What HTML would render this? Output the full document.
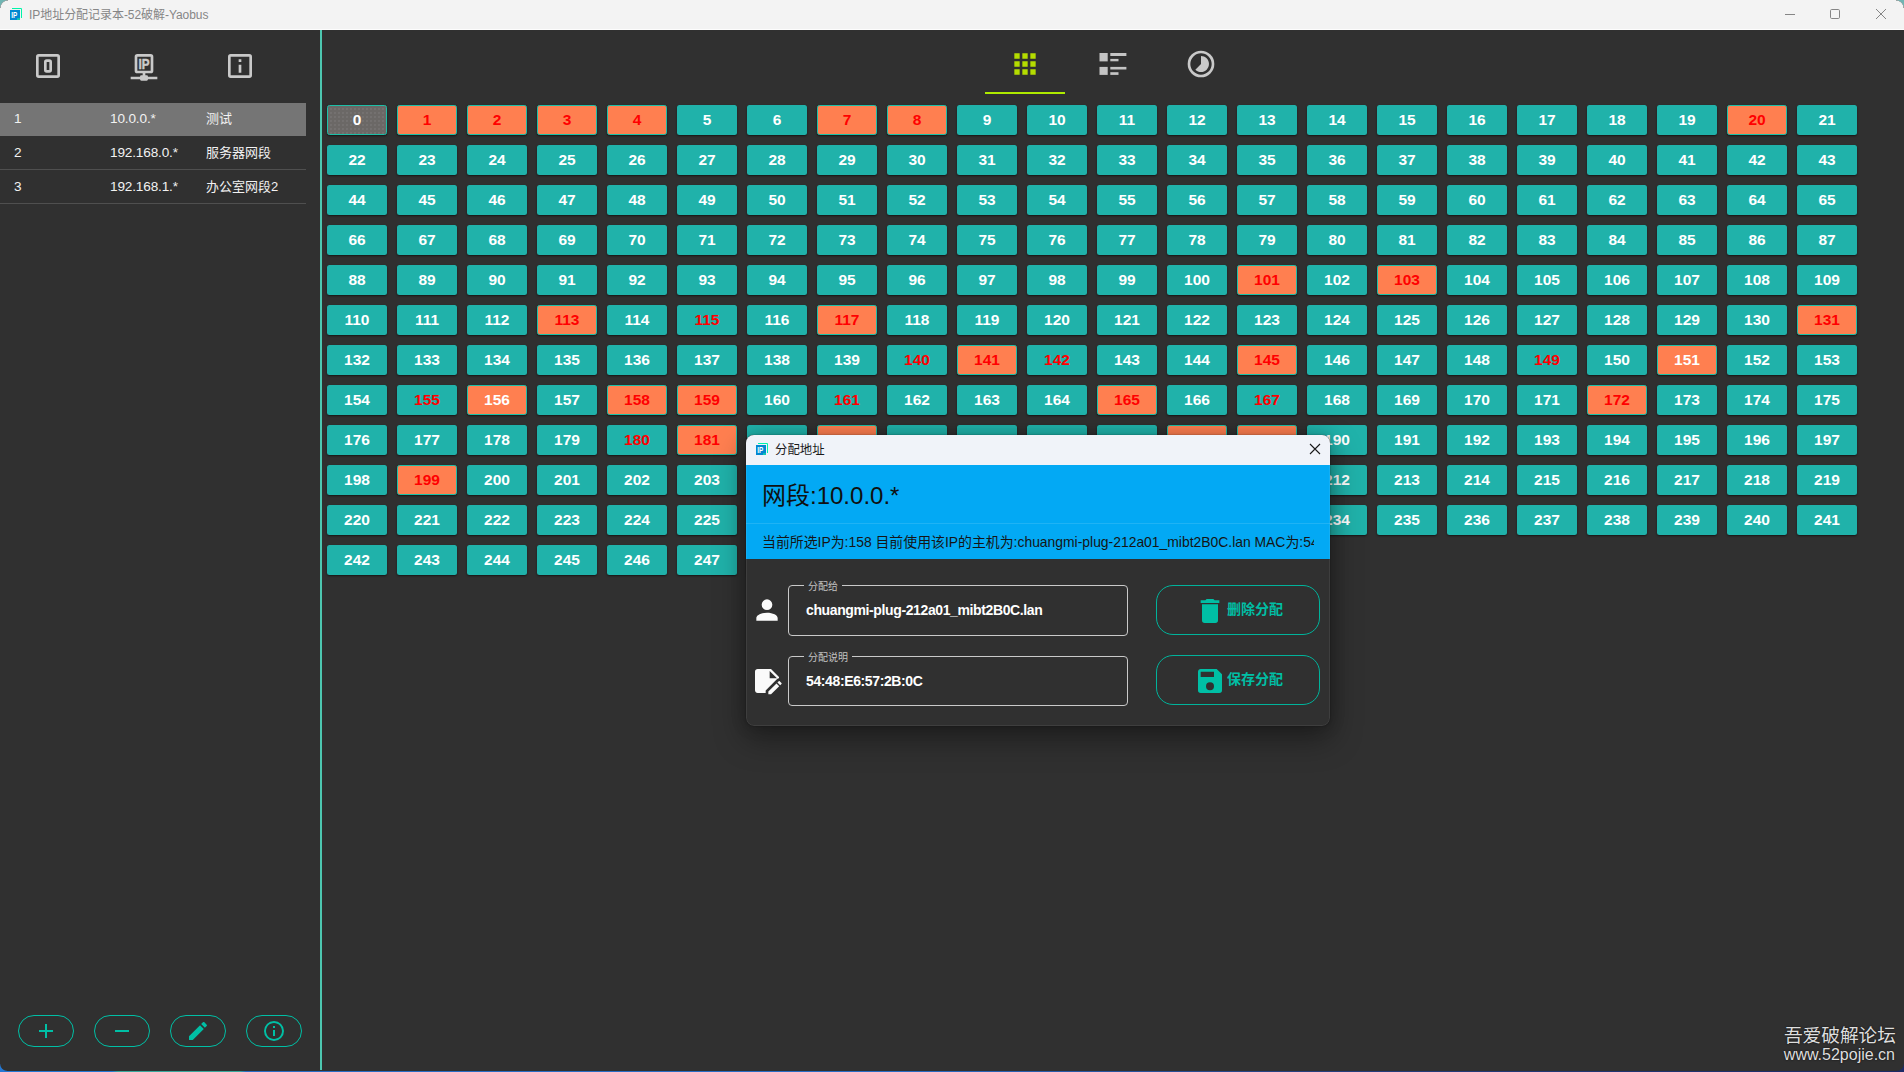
<!DOCTYPE html>
<html lang="zh-CN">
<head>
<meta charset="utf-8">
<title>IP地址分配记录本-52破解-Yaobus</title>
<style>
*{box-sizing:border-box;margin:0;padding:0}
html,body{width:1904px;height:1072px;overflow:hidden;background:#303030}
body{position:relative;font-family:"Liberation Sans","Noto Sans CJK SC",sans-serif;color:#fff}
.abs{position:absolute}
#titlebar{position:absolute;left:0;top:0;width:1904px;height:30px;background:#f3f3f3;border-bottom:1px solid #fdfdfd}
#title{position:absolute;left:29px;top:7px;letter-spacing:-0.05px;font-size:12px;line-height:17px;color:#868686;white-space:nowrap}
#vline{position:absolute;left:320px;top:30px;width:2px;height:1040px;background:#4dc7b0}
.row{position:absolute;left:0;width:306px;height:33px;font-size:13px;line-height:33px;color:#f2f2f2;white-space:nowrap}
.row span{position:absolute;top:0}
.row .a{left:14px;font-size:13.6px}.row .b{left:110px;font-size:13.6px;letter-spacing:-0.15px}.row .d{left:206px}
.sep{position:absolute;left:0;width:306px;height:1px;background:#4f4f4f}
.c{position:absolute;width:60px;height:30px;background:#20b2aa;border-radius:2.5px;font-weight:bold;font-size:15.5px;line-height:29px;text-align:center;color:#fff;box-shadow:0 1px 2px rgba(0,0,0,.55)}
.c.o{background:#ff7f50;border:1px solid #1cbfa8;line-height:27px}
.c.g{background:#6b6866 radial-gradient(circle,rgba(255,255,255,.13) 0.5px,rgba(255,255,255,0) 0.9px) 1px 1px/4px 4px;border:1px solid #1cbfa8;line-height:27px}
.c.r{color:#ff0000}
.pill{position:absolute;top:1015px;width:56px;height:32px;border:1px solid #00bfa5;border-radius:16px}
.pill svg{position:absolute;left:15px;top:3px;width:24px;height:24px;fill:#00bfa5}
svg{display:block}
#dlg{position:absolute;left:746px;top:435px;width:584px;height:291px;background:#303030;border-radius:8px;box-shadow:0 12px 30px 2px rgba(0,0,0,.36),0 0 16px rgba(0,0,0,.18),0 0 1.5px rgba(0,0,0,.5);overflow:hidden}
#dlg::after{content:"";position:absolute;left:0;top:0;right:0;bottom:0;border:1px solid rgba(255,255,255,.07);border-radius:8px}
#dlgt{position:absolute;left:0;top:0;width:584px;height:30px;background:#f0f3f9}
#dlgt .t{position:absolute;left:29px;top:6.5px;font-size:12.4px;line-height:17px;color:#1a1a1a}
#hd1{position:absolute;left:0;top:30px;width:584px;height:59px;background:#03a9f4;border-bottom:1px solid #1fb3f5}
#hd1 span{position:absolute;left:16px;top:15px;font-size:24px;line-height:32px;color:#101010;white-space:nowrap}
#hd2{position:absolute;left:0;top:89px;width:584px;height:35px;background:#03a9f4}
#hd2 div{position:absolute;left:16px;top:0;width:552px;height:35px;overflow:hidden}
#hd2 span{position:absolute;left:0;top:9px;font-size:13.9px;line-height:18px;color:#151515;white-space:nowrap}
.inp{position:absolute;left:42px;width:340px;height:51px;border:1px solid #c9c9c9;border-radius:4px}
.inp .lab{position:absolute;left:15px;top:-6.5px;padding:0 4px;background:#303030;font-size:10px;line-height:14px;color:#c2c2c2;white-space:nowrap}
.inp .val{position:absolute;left:17px;top:14px;font-size:14px;letter-spacing:-0.38px;line-height:20px;font-weight:bold;color:#fff;white-space:nowrap}
.btn{position:absolute;left:410px;width:164px;height:50px;border:1px solid #00b39b;border-radius:17px;color:#00bfa5}
.btn svg{position:absolute;left:37px;top:9px;width:32px;height:32px;fill:#00bfa5}
.btn span{position:absolute;left:70px;top:13px;font-size:14px;line-height:20px;font-weight:bold;white-space:nowrap}
.dico{position:absolute;left:5px;width:32px;height:32px;fill:#fafafa}
#wm{position:absolute;right:9px;top:1024px;text-align:right;color:#dedede;white-space:nowrap;text-shadow:0 0 2px rgba(0,0,0,.8)}
#wm .l1{font-size:18.7px;line-height:24px;margin-right:-1px}
#wm .l2{font-size:16px;line-height:18px;margin-top:-2px}
</style>
</head>
<body>
<!-- window title bar -->
<div id="titlebar">
  <svg class="abs" style="left:9px;top:7px" width="14" height="14" viewBox="0 0 14 14">
    <path d="M3 1.5h9.5V11" fill="none" stroke="#00f4a9" stroke-width="1"/>
    <rect x="1" y="3" width="10" height="10" fill="#0288d1"/>
    <rect x="8" y="11.2" width="3" height="1.8" fill="#14c9b0"/>
    <text x="2.2" y="11.1" font-family="Liberation Sans, sans-serif" font-size="8.8" font-weight="bold" fill="#fff" textLength="6" lengthAdjust="spacingAndGlyphs">IP</text>
  </svg>
  <div id="title">IP地址分配记录本-52破解-Yaobus</div>
  <svg class="abs" style="left:1780px;top:4px" width="112" height="22" viewBox="0 0 112 22" fill="none" stroke="#858585" stroke-width="1">
    <path d="M5 10.5h10"/>
    <rect x="50.5" y="5.5" width="9" height="9" rx="1.2"/>
    <path d="M96 5l10 10M106 5l-10 10"/>
  </svg>
</div>

<!-- left panel -->
<svg class="abs" style="left:32px;top:50px" width="32" height="32" viewBox="0 0 24 24" fill="#c9c9c9"><path d="M19,19V5H5V19H19M19,3A2,2 0 0,1 21,5V19A2,2 0 0,1 19,21H5A2,2 0 0,1 3,19V5A2,2 0 0,1 5,3H19M11,7H13A2,2 0 0,1 15,9V15A2,2 0 0,1 13,17H11A2,2 0 0,1 9,15V9A2,2 0 0,1 11,7M11,9V15H13V9H11Z"/></svg>
<svg class="abs" style="left:128px;top:50px" width="32" height="32" viewBox="0 0 24 24" fill="#c9c9c9">
  <path fill-rule="evenodd" d="M7,3H17A2,2 0 0,1 19,5V15.5A2,2 0 0,1 17,17.5H13V19H14A1,1 0 0,1 15,20H22V22H15A1,1 0 0,1 14,23H10A1,1 0 0,1 9,22H2V20H9A1,1 0 0,1 10,19H11V17.5H7A2,2 0 0,1 5,15.5V5A2,2 0 0,1 7,3M7,5V15.5H17V5H7Z"/>
  <text x="7.9" y="14.1" font-family="Liberation Sans, sans-serif" font-size="10.6" font-weight="bold" stroke="#c9c9c9" stroke-width="0.35" textLength="8.3" lengthAdjust="spacingAndGlyphs">IP</text>
</svg>
<svg class="abs" style="left:224px;top:50px" width="32" height="32" viewBox="0 0 24 24" fill="#c9c9c9"><path d="M11,7H13V9H11V7M11,11H13V17H11V11M19,3H5A2,2 0 0,0 3,5V19A2,2 0 0,0 5,21H19A2,2 0 0,0 21,19V5A2,2 0 0,0 19,3M19,19H5V5H19V19Z"/></svg>

<div class="row" style="top:103px;background:#757575;line-height:32px"><span class="a">1</span><span class="b">10.0.0.*</span><span class="d">测试</span></div>
<div class="row" style="top:136px;line-height:34px"><span class="a">2</span><span class="b">192.168.0.*</span><span class="d">服务器网段</span></div>
<div class="sep" style="top:169px"></div>
<div class="row" style="top:170px"><span class="a">3</span><span class="b">192.168.1.*</span><span class="d">办公室网段2</span></div>
<div class="sep" style="top:203px"></div>

<div class="pill" style="left:18px"><svg viewBox="0 0 24 24"><path d="M19,13H13V19H11V13H5V11H11V5H13V11H19V13Z"/></svg></div>
<div class="pill" style="left:94px"><svg viewBox="0 0 24 24"><path d="M19,13H5V11H19V13Z"/></svg></div>
<div class="pill" style="left:170px"><svg viewBox="0 0 24 24"><path d="M20.71,7.04C21.1,6.65 21.1,6 20.71,5.63L18.37,3.29C18,2.9 17.35,2.9 16.96,3.29L15.12,5.12L18.87,8.87M3,17.25V21H6.75L17.81,9.93L14.06,6.18L3,17.25Z"/></svg></div>
<div class="pill" style="left:246px"><svg viewBox="0 0 24 24"><path d="M11,9H13V7H11M12,20C7.59,20 4,16.41 4,12C4,7.59 7.59,4 12,4C16.41,4 20,7.59 20,12C20,16.41 16.41,20 12,20M12,2A10,10 0 0,0 2,12A10,10 0 0,0 12,22A10,10 0 0,0 22,12A10,10 0 0,0 12,2M11,17H13V11H11V17Z"/></svg></div>

<div id="vline"></div>

<!-- top tabs -->
<svg class="abs" style="left:1009px;top:48px" width="32" height="32" viewBox="0 0 24 24" fill="#b4dc00"><path d="M4 8h4V4H4v4zm6 12h4v-4h-4v4zm-6 0h4v-4H4v4zm0-6h4v-4H4v4zm6 0h4v-4h-4v4zm6-10v4h4V4h-4zm-6 4h4V4h-4v4zm6 6h4v-4h-4v4zm0 6h4v-4h-4v4z"/></svg>
<div class="abs" style="left:985px;top:92px;width:80px;height:2px;background:#aeea00"></div>
<svg class="abs" style="left:1099px;top:52px" width="28" height="24" viewBox="0 0 28 24" fill="#c4c4c4">
  <rect x="0.5" y="1" width="8.2" height="8.4"/><rect x="11.3" y="1" width="16.1" height="3"/><rect x="11.3" y="6.9" width="8.2" height="2.4"/>
  <rect x="0.5" y="14.9" width="8.2" height="8"/><rect x="11.3" y="14.9" width="16.1" height="2.6"/><rect x="11.3" y="20.2" width="8.2" height="2.7"/>
</svg>
<svg class="abs" style="left:1185px;top:48px" width="32" height="32" viewBox="0 0 24 24" fill="#c9c9c9"><path d="M16.24,7.76C15.07,6.58 13.53,6 12,6V12L7.76,16.24C10.1,18.58 13.9,18.58 16.24,16.24C18.59,13.9 18.59,10.1 16.24,7.76M12,2A10,10 0 0,0 2,12A10,10 0 0,0 12,22A10,10 0 0,0 22,12A10,10 0 0,0 12,2M12,20A8,8 0 0,1 4,12A8,8 0 0,1 12,4A8,8 0 0,1 20,12A8,8 0 0,1 12,20Z"/></svg>

<!-- grid -->
<div class="c g" style="left:327px;top:105px">0</div>
<div class="c o r" style="left:397px;top:105px">1</div>
<div class="c o r" style="left:467px;top:105px">2</div>
<div class="c o r" style="left:537px;top:105px">3</div>
<div class="c o r" style="left:607px;top:105px">4</div>
<div class="c" style="left:677px;top:105px">5</div>
<div class="c" style="left:747px;top:105px">6</div>
<div class="c o r" style="left:817px;top:105px">7</div>
<div class="c o r" style="left:887px;top:105px">8</div>
<div class="c" style="left:957px;top:105px">9</div>
<div class="c" style="left:1027px;top:105px">10</div>
<div class="c" style="left:1097px;top:105px">11</div>
<div class="c" style="left:1167px;top:105px">12</div>
<div class="c" style="left:1237px;top:105px">13</div>
<div class="c" style="left:1307px;top:105px">14</div>
<div class="c" style="left:1377px;top:105px">15</div>
<div class="c" style="left:1447px;top:105px">16</div>
<div class="c" style="left:1517px;top:105px">17</div>
<div class="c" style="left:1587px;top:105px">18</div>
<div class="c" style="left:1657px;top:105px">19</div>
<div class="c o r" style="left:1727px;top:105px">20</div>
<div class="c" style="left:1797px;top:105px">21</div>
<div class="c" style="left:327px;top:145px">22</div>
<div class="c" style="left:397px;top:145px">23</div>
<div class="c" style="left:467px;top:145px">24</div>
<div class="c" style="left:537px;top:145px">25</div>
<div class="c" style="left:607px;top:145px">26</div>
<div class="c" style="left:677px;top:145px">27</div>
<div class="c" style="left:747px;top:145px">28</div>
<div class="c" style="left:817px;top:145px">29</div>
<div class="c" style="left:887px;top:145px">30</div>
<div class="c" style="left:957px;top:145px">31</div>
<div class="c" style="left:1027px;top:145px">32</div>
<div class="c" style="left:1097px;top:145px">33</div>
<div class="c" style="left:1167px;top:145px">34</div>
<div class="c" style="left:1237px;top:145px">35</div>
<div class="c" style="left:1307px;top:145px">36</div>
<div class="c" style="left:1377px;top:145px">37</div>
<div class="c" style="left:1447px;top:145px">38</div>
<div class="c" style="left:1517px;top:145px">39</div>
<div class="c" style="left:1587px;top:145px">40</div>
<div class="c" style="left:1657px;top:145px">41</div>
<div class="c" style="left:1727px;top:145px">42</div>
<div class="c" style="left:1797px;top:145px">43</div>
<div class="c" style="left:327px;top:185px">44</div>
<div class="c" style="left:397px;top:185px">45</div>
<div class="c" style="left:467px;top:185px">46</div>
<div class="c" style="left:537px;top:185px">47</div>
<div class="c" style="left:607px;top:185px">48</div>
<div class="c" style="left:677px;top:185px">49</div>
<div class="c" style="left:747px;top:185px">50</div>
<div class="c" style="left:817px;top:185px">51</div>
<div class="c" style="left:887px;top:185px">52</div>
<div class="c" style="left:957px;top:185px">53</div>
<div class="c" style="left:1027px;top:185px">54</div>
<div class="c" style="left:1097px;top:185px">55</div>
<div class="c" style="left:1167px;top:185px">56</div>
<div class="c" style="left:1237px;top:185px">57</div>
<div class="c" style="left:1307px;top:185px">58</div>
<div class="c" style="left:1377px;top:185px">59</div>
<div class="c" style="left:1447px;top:185px">60</div>
<div class="c" style="left:1517px;top:185px">61</div>
<div class="c" style="left:1587px;top:185px">62</div>
<div class="c" style="left:1657px;top:185px">63</div>
<div class="c" style="left:1727px;top:185px">64</div>
<div class="c" style="left:1797px;top:185px">65</div>
<div class="c" style="left:327px;top:225px">66</div>
<div class="c" style="left:397px;top:225px">67</div>
<div class="c" style="left:467px;top:225px">68</div>
<div class="c" style="left:537px;top:225px">69</div>
<div class="c" style="left:607px;top:225px">70</div>
<div class="c" style="left:677px;top:225px">71</div>
<div class="c" style="left:747px;top:225px">72</div>
<div class="c" style="left:817px;top:225px">73</div>
<div class="c" style="left:887px;top:225px">74</div>
<div class="c" style="left:957px;top:225px">75</div>
<div class="c" style="left:1027px;top:225px">76</div>
<div class="c" style="left:1097px;top:225px">77</div>
<div class="c" style="left:1167px;top:225px">78</div>
<div class="c" style="left:1237px;top:225px">79</div>
<div class="c" style="left:1307px;top:225px">80</div>
<div class="c" style="left:1377px;top:225px">81</div>
<div class="c" style="left:1447px;top:225px">82</div>
<div class="c" style="left:1517px;top:225px">83</div>
<div class="c" style="left:1587px;top:225px">84</div>
<div class="c" style="left:1657px;top:225px">85</div>
<div class="c" style="left:1727px;top:225px">86</div>
<div class="c" style="left:1797px;top:225px">87</div>
<div class="c" style="left:327px;top:265px">88</div>
<div class="c" style="left:397px;top:265px">89</div>
<div class="c" style="left:467px;top:265px">90</div>
<div class="c" style="left:537px;top:265px">91</div>
<div class="c" style="left:607px;top:265px">92</div>
<div class="c" style="left:677px;top:265px">93</div>
<div class="c" style="left:747px;top:265px">94</div>
<div class="c" style="left:817px;top:265px">95</div>
<div class="c" style="left:887px;top:265px">96</div>
<div class="c" style="left:957px;top:265px">97</div>
<div class="c" style="left:1027px;top:265px">98</div>
<div class="c" style="left:1097px;top:265px">99</div>
<div class="c" style="left:1167px;top:265px">100</div>
<div class="c o r" style="left:1237px;top:265px">101</div>
<div class="c" style="left:1307px;top:265px">102</div>
<div class="c o r" style="left:1377px;top:265px">103</div>
<div class="c" style="left:1447px;top:265px">104</div>
<div class="c" style="left:1517px;top:265px">105</div>
<div class="c" style="left:1587px;top:265px">106</div>
<div class="c" style="left:1657px;top:265px">107</div>
<div class="c" style="left:1727px;top:265px">108</div>
<div class="c" style="left:1797px;top:265px">109</div>
<div class="c" style="left:327px;top:305px">110</div>
<div class="c" style="left:397px;top:305px">111</div>
<div class="c" style="left:467px;top:305px">112</div>
<div class="c o r" style="left:537px;top:305px">113</div>
<div class="c" style="left:607px;top:305px">114</div>
<div class="c r" style="left:677px;top:305px">115</div>
<div class="c" style="left:747px;top:305px">116</div>
<div class="c o r" style="left:817px;top:305px">117</div>
<div class="c" style="left:887px;top:305px">118</div>
<div class="c" style="left:957px;top:305px">119</div>
<div class="c" style="left:1027px;top:305px">120</div>
<div class="c" style="left:1097px;top:305px">121</div>
<div class="c" style="left:1167px;top:305px">122</div>
<div class="c" style="left:1237px;top:305px">123</div>
<div class="c" style="left:1307px;top:305px">124</div>
<div class="c" style="left:1377px;top:305px">125</div>
<div class="c" style="left:1447px;top:305px">126</div>
<div class="c" style="left:1517px;top:305px">127</div>
<div class="c" style="left:1587px;top:305px">128</div>
<div class="c" style="left:1657px;top:305px">129</div>
<div class="c" style="left:1727px;top:305px">130</div>
<div class="c o r" style="left:1797px;top:305px">131</div>
<div class="c" style="left:327px;top:345px">132</div>
<div class="c" style="left:397px;top:345px">133</div>
<div class="c" style="left:467px;top:345px">134</div>
<div class="c" style="left:537px;top:345px">135</div>
<div class="c" style="left:607px;top:345px">136</div>
<div class="c" style="left:677px;top:345px">137</div>
<div class="c" style="left:747px;top:345px">138</div>
<div class="c" style="left:817px;top:345px">139</div>
<div class="c r" style="left:887px;top:345px">140</div>
<div class="c o r" style="left:957px;top:345px">141</div>
<div class="c r" style="left:1027px;top:345px">142</div>
<div class="c" style="left:1097px;top:345px">143</div>
<div class="c" style="left:1167px;top:345px">144</div>
<div class="c o r" style="left:1237px;top:345px">145</div>
<div class="c" style="left:1307px;top:345px">146</div>
<div class="c" style="left:1377px;top:345px">147</div>
<div class="c" style="left:1447px;top:345px">148</div>
<div class="c r" style="left:1517px;top:345px">149</div>
<div class="c" style="left:1587px;top:345px">150</div>
<div class="c o" style="left:1657px;top:345px">151</div>
<div class="c" style="left:1727px;top:345px">152</div>
<div class="c" style="left:1797px;top:345px">153</div>
<div class="c" style="left:327px;top:385px">154</div>
<div class="c r" style="left:397px;top:385px">155</div>
<div class="c o" style="left:467px;top:385px">156</div>
<div class="c" style="left:537px;top:385px">157</div>
<div class="c o r" style="left:607px;top:385px">158</div>
<div class="c o r" style="left:677px;top:385px">159</div>
<div class="c" style="left:747px;top:385px">160</div>
<div class="c r" style="left:817px;top:385px">161</div>
<div class="c" style="left:887px;top:385px">162</div>
<div class="c" style="left:957px;top:385px">163</div>
<div class="c" style="left:1027px;top:385px">164</div>
<div class="c o r" style="left:1097px;top:385px">165</div>
<div class="c" style="left:1167px;top:385px">166</div>
<div class="c r" style="left:1237px;top:385px">167</div>
<div class="c" style="left:1307px;top:385px">168</div>
<div class="c" style="left:1377px;top:385px">169</div>
<div class="c" style="left:1447px;top:385px">170</div>
<div class="c" style="left:1517px;top:385px">171</div>
<div class="c o r" style="left:1587px;top:385px">172</div>
<div class="c" style="left:1657px;top:385px">173</div>
<div class="c" style="left:1727px;top:385px">174</div>
<div class="c" style="left:1797px;top:385px">175</div>
<div class="c" style="left:327px;top:425px">176</div>
<div class="c" style="left:397px;top:425px">177</div>
<div class="c" style="left:467px;top:425px">178</div>
<div class="c" style="left:537px;top:425px">179</div>
<div class="c r" style="left:607px;top:425px">180</div>
<div class="c o r" style="left:677px;top:425px">181</div>
<div class="c" style="left:747px;top:425px">182</div>
<div class="c o r" style="left:817px;top:425px">183</div>
<div class="c" style="left:887px;top:425px">184</div>
<div class="c" style="left:957px;top:425px">185</div>
<div class="c" style="left:1027px;top:425px">186</div>
<div class="c" style="left:1097px;top:425px">187</div>
<div class="c o r" style="left:1167px;top:425px">188</div>
<div class="c o r" style="left:1237px;top:425px">189</div>
<div class="c" style="left:1307px;top:425px">190</div>
<div class="c" style="left:1377px;top:425px">191</div>
<div class="c" style="left:1447px;top:425px">192</div>
<div class="c" style="left:1517px;top:425px">193</div>
<div class="c" style="left:1587px;top:425px">194</div>
<div class="c" style="left:1657px;top:425px">195</div>
<div class="c" style="left:1727px;top:425px">196</div>
<div class="c" style="left:1797px;top:425px">197</div>
<div class="c" style="left:327px;top:465px">198</div>
<div class="c o r" style="left:397px;top:465px">199</div>
<div class="c" style="left:467px;top:465px">200</div>
<div class="c" style="left:537px;top:465px">201</div>
<div class="c" style="left:607px;top:465px">202</div>
<div class="c" style="left:677px;top:465px">203</div>
<div class="c" style="left:747px;top:465px">204</div>
<div class="c" style="left:817px;top:465px">205</div>
<div class="c" style="left:887px;top:465px">206</div>
<div class="c" style="left:957px;top:465px">207</div>
<div class="c" style="left:1027px;top:465px">208</div>
<div class="c" style="left:1097px;top:465px">209</div>
<div class="c" style="left:1167px;top:465px">210</div>
<div class="c" style="left:1237px;top:465px">211</div>
<div class="c" style="left:1307px;top:465px">212</div>
<div class="c" style="left:1377px;top:465px">213</div>
<div class="c" style="left:1447px;top:465px">214</div>
<div class="c" style="left:1517px;top:465px">215</div>
<div class="c" style="left:1587px;top:465px">216</div>
<div class="c" style="left:1657px;top:465px">217</div>
<div class="c" style="left:1727px;top:465px">218</div>
<div class="c" style="left:1797px;top:465px">219</div>
<div class="c" style="left:327px;top:505px">220</div>
<div class="c" style="left:397px;top:505px">221</div>
<div class="c" style="left:467px;top:505px">222</div>
<div class="c" style="left:537px;top:505px">223</div>
<div class="c" style="left:607px;top:505px">224</div>
<div class="c" style="left:677px;top:505px">225</div>
<div class="c" style="left:747px;top:505px">226</div>
<div class="c" style="left:817px;top:505px">227</div>
<div class="c" style="left:887px;top:505px">228</div>
<div class="c" style="left:957px;top:505px">229</div>
<div class="c" style="left:1027px;top:505px">230</div>
<div class="c" style="left:1097px;top:505px">231</div>
<div class="c" style="left:1167px;top:505px">232</div>
<div class="c" style="left:1237px;top:505px">233</div>
<div class="c" style="left:1307px;top:505px">234</div>
<div class="c" style="left:1377px;top:505px">235</div>
<div class="c" style="left:1447px;top:505px">236</div>
<div class="c" style="left:1517px;top:505px">237</div>
<div class="c" style="left:1587px;top:505px">238</div>
<div class="c" style="left:1657px;top:505px">239</div>
<div class="c" style="left:1727px;top:505px">240</div>
<div class="c" style="left:1797px;top:505px">241</div>
<div class="c" style="left:327px;top:545px">242</div>
<div class="c" style="left:397px;top:545px">243</div>
<div class="c" style="left:467px;top:545px">244</div>
<div class="c" style="left:537px;top:545px">245</div>
<div class="c" style="left:607px;top:545px">246</div>
<div class="c" style="left:677px;top:545px">247</div>
<div class="c" style="left:747px;top:545px">248</div>
<div class="c" style="left:817px;top:545px">249</div>
<div class="c" style="left:887px;top:545px">250</div>
<div class="c" style="left:957px;top:545px">251</div>
<div class="c" style="left:1027px;top:545px">252</div>
<div class="c" style="left:1097px;top:545px">253</div>
<div class="c" style="left:1167px;top:545px">254</div>
<div class="c" style="left:1237px;top:545px">255</div>

<!-- watermark -->
<div id="wm"><div class="l1">吾爱破解论坛</div><div class="l2">www.52pojie.cn</div></div>

<!-- dialog -->
<div id="dlg">
  <div id="dlgt">
    <svg class="abs" style="left:9px;top:7px" width="14" height="14" viewBox="0 0 14 14">
      <path d="M3 1.5h9.5V11" fill="none" stroke="#00f4a9" stroke-width="1"/>
      <rect x="1" y="3" width="10" height="10" fill="#0288d1"/>
      <rect x="8" y="11.2" width="3" height="1.8" fill="#14c9b0"/>
      <text x="2.2" y="11.1" font-family="Liberation Sans, sans-serif" font-size="8.8" font-weight="bold" fill="#fff" textLength="6" lengthAdjust="spacingAndGlyphs">IP</text>
    </svg>
    <div class="t">分配地址</div>
    <svg class="abs" style="left:563px;top:8px" width="12" height="12" viewBox="0 0 12 12" fill="none" stroke="#1a1a1a" stroke-width="1.1"><path d="M1 1l10 10M11 1L1 11"/></svg>
  </div>
  <div id="hd1"><span>网段:10.0.0.*</span></div>
  <div id="hd2"><div><span>当前所选IP为:158 目前使用该IP的主机为:chuangmi-plug-212a01_mibt2B0C.lan MAC为:54:48:E6:57:2B:0C</span></div></div>

  <svg class="dico" style="top:159px" viewBox="0 0 24 24"><path d="M12,4A4,4 0 0,1 16,8A4,4 0 0,1 12,12A4,4 0 0,1 8,8A4,4 0 0,1 12,4M12,14C16.42,14 20,15.79 20,18V20H4V18C4,15.79 7.58,14 12,14Z"/></svg>
  <div class="inp" style="top:150px"><div class="lab">分配给</div><div class="val">chuangmi-plug-212a01_mibt2B0C.lan</div></div>
  <div class="btn" style="top:150px"><svg viewBox="0 0 24 24"><path d="M19,4H15.5L14.5,3H9.5L8.5,4H5V6H19M6,19A2,2 0 0,0 8,21H16A2,2 0 0,0 18,19V7H6V19Z"/></svg><span>删除分配</span></div>

  <svg class="dico" style="top:230px" viewBox="0 0 24 24"><path d="M21 10V9L15 3H5C3.89 3 3 3.89 3 5V19C3 20.11 3.9 21 5 21H11V19.13L19.39 10.74C19.83 10.3 20.39 10.06 21 10M14 4.5L19.5 10H14V4.5M22.85 14.19L21.87 15.17L19.83 13.13L20.81 12.15C21 11.95 21.33 11.95 21.53 12.15L22.85 13.47C23.05 13.67 23.05 14 22.85 14.19M19.13 13.83L21.17 15.87L15.04 22H13V19.96L19.13 13.83Z"/></svg>
  <div class="inp" style="top:221px;height:50px"><div class="lab">分配说明</div><div class="val">54:48:E6:57:2B:0C</div></div>
  <div class="btn" style="top:220px"><svg viewBox="0 0 24 24"><path d="M15,9H5V5H15M12,19A3,3 0 0,1 9,16A3,3 0 0,1 12,13A3,3 0 0,1 15,16A3,3 0 0,1 12,19M17,3H5C3.89,3 3,3.9 3,5V19A2,2 0 0,0 5,21H19A2,2 0 0,0 21,19V7L17,3Z"/></svg><span>保存分配</span></div>
</div>

<!-- desktop sliver under window -->
<div class="abs" style="left:0;top:1070.6px;width:1904px;height:1.4px;background:linear-gradient(90deg,#2478d4 0,#2478d4 112px,#3aa79c 118px,#3aa79c 240px,#2a6cc4 246px,#2a6cc4 900px,#27407e 1300px,#1c2a66 1904px)"></div>
<div class="abs" style="left:0;top:0;width:8px;height:8px;background:radial-gradient(circle at 8px 8px,rgba(0,0,0,0) 7px,#a0a4a4 7.5px,#6fb5b3 8.3px)"></div>
<div class="abs" style="left:1896px;top:0;width:8px;height:8px;background:radial-gradient(circle at 0 8px,rgba(0,0,0,0) 7px,#a0a4a4 7.5px,#6fb5b3 8.3px)"></div>
<div class="abs" style="left:0;top:1064px;width:7px;height:7px;background:radial-gradient(circle at 7px 0,rgba(0,0,0,0) 6.3px,#2478d4 7.2px)"></div>
<div class="abs" style="left:1897px;top:1064px;width:7px;height:7px;background:radial-gradient(circle at 0 0,rgba(0,0,0,0) 6.3px,#1c2a66 7.2px)"></div>
</body>
</html>
